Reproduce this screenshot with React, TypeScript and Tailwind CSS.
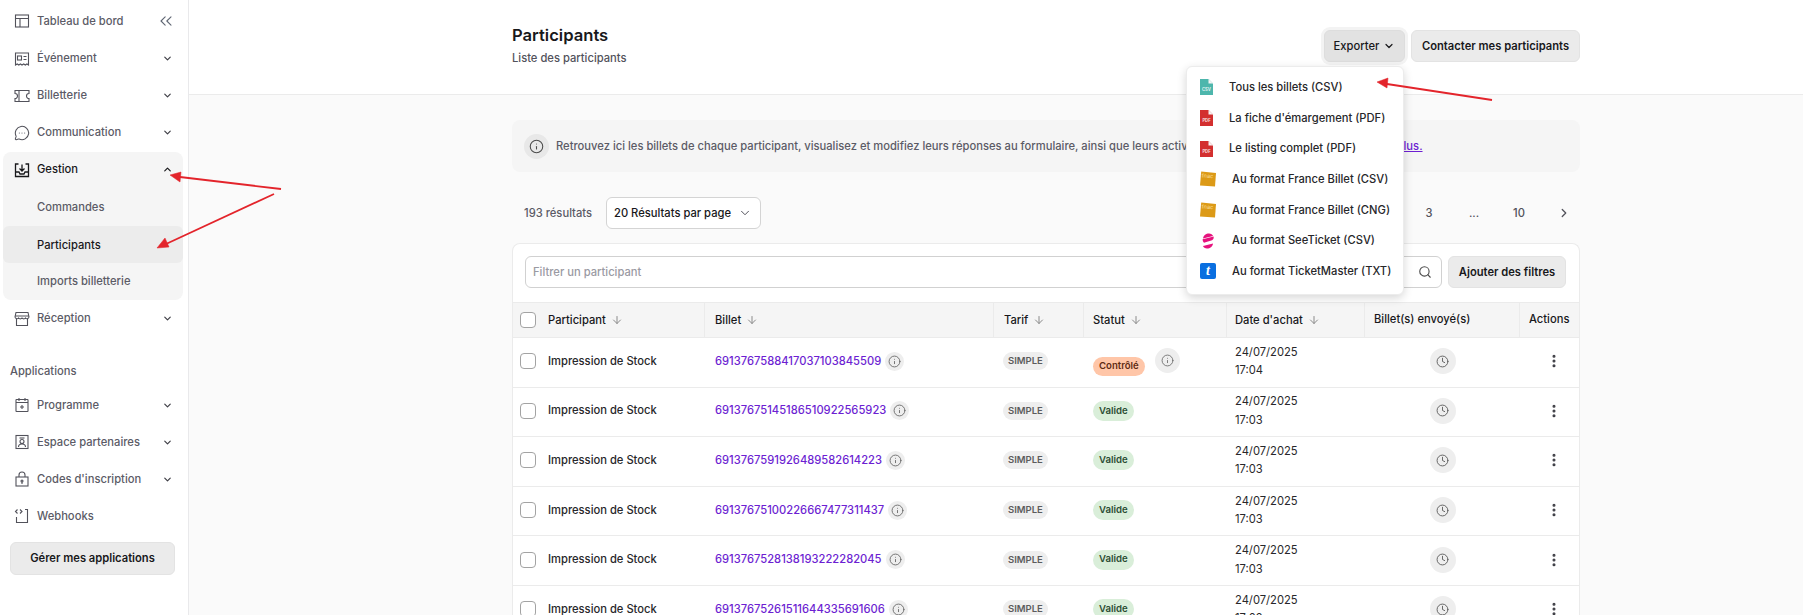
import React from 'react';
import { ChevronDown, ChevronUp, ChevronRight, ChevronsLeft, ArrowDown, Info, Clock, Search, EllipsisVertical, MessageCircleMore } from 'lucide-react';

const ic = { width: 16, height: 16, viewBox: '0 0 16 16', fill: 'none', stroke: 'currentColor', strokeWidth: 1.1 };
const IconTable = () => <svg {...ic}><rect x="1.5" y="2" width="13" height="12" /><path d="M1.5 5.5h13M6 5.5V14" /></svg>;
const IconEvent = () => <svg {...ic}><path d="M1.5 14V2h13v12l-1.6-1-1.6 1-1.6-1-1.7 1-1.6-1-1.6 1-1.6-1z" /><rect x="3.5" y="5" width="4" height="4" /><path d="M9.5 5.5h3M9.5 8.5h3" /></svg>;
const IconTicket = () => <svg {...ic}><path d="M1 2.5h14v3a2.500 2.500 0 0 0 0 5v3H1v-3a2.500 2.500 0 0 0 0-5z" /><path d="M5 2.500v11" /></svg>;
const IconInbox = () => <svg {...ic} strokeWidth={1.3}><path d="M4.500 2H1.500v12.500h13V2h-3M1.500 10h3.500l1 2h4l1-2h3.500M8 2.500v6.500M5.500 6.500 8 9l2.500-2.500" /></svg>;
const IconStore = () => <svg {...ic}><path d="M2 1.500h12l1 4.500a2 2 0 0 1-3.500 1 2.200 2.200 0 0 1-3.500 0 2.200 2.200 0 0 1-3.500 0A2 2 0 0 1 1 6z" /><path d="M1 5h14M2.500 8v6.500h11V8" /></svg>;
const IconCalendar = () => <svg {...ic}><rect x="2" y="2.500" width="12" height="12" rx="0.500" /><path d="M2 5.500h12M5 1v3M11 1v3M8 8v4M6 10h4" /></svg>;
const IconPartner = () => <svg {...ic}><rect x="2" y="1.500" width="12" height="13" /><path d="M5.500 4h5" /><circle cx="8" cy="7.500" r="2" /><path d="M4.500 13c0-2 1.500-3 3.500-3s3.500 1 3.500 3" /></svg>;
const IconLock = () => <svg {...ic}><rect x="2" y="6" width="12" height="9" /><path d="M5 6V4a3 3 0 0 1 6 0v2" /><circle cx="8" cy="10" r="1" /><path d="M8 11v2" /></svg>;
const IconHook = () => <svg {...ic}><path d="M2.500 9v5.500h11V1.500H11" /><path d="M3.500 1.500 1.500 3.500l2 2M6 1.500l2 2-2 2" /></svg>;

function NavItem({ icon, label, chev = 'down', dark = false, cls = 'h-[37px] pl-[14px] pr-[15px]' }: { icon: React.ReactNode; label: string; chev?: 'down' | 'up' | 'none'; dark?: boolean; cls?: string }) {
  return (
    <div className={'flex items-center ' + cls}>
      <span className={dark ? 'w-[23px] text-[#18181b]' : 'w-[23px] text-[#52525b]'}>{icon}</span>
      <span className={dark ? 'flex-1 text-[11.2px] font-medium text-[#18181b]' : 'flex-1 text-[11.2px] font-medium text-[#5b5b66]'}>{label}</span>
      {chev === 'down' && <ChevronDown size={11} strokeWidth={2.6} className="text-[#3f3f46]" />}
      {chev === 'up' && <ChevronUp size={11} strokeWidth={2.6} className="text-[#18181b]" />}
    </div>
  );
}

function Sidebar() {
  return (
    <aside className="w-[189px] shrink-0 bg-white border-r border-[#e9e9eb] flex flex-col pt-[3px] h-[615px]">
      <div className="h-[37px] pb-[1px] flex items-center pl-[14px] pr-[12px]">
        <span className="w-[23px] text-[#52525b]"><IconTable /></span>
        <span className="flex-1 text-[11.2px] font-medium text-[#5b5b66]">Tableau de bord</span>
        <ChevronsLeft size={20} strokeWidth={1.3} className="text-[#5f6673]" />
      </div>
      <NavItem icon={<IconEvent />} label="Événement" />
      <NavItem icon={<IconTicket />} label="Billetterie" />
      <NavItem icon={<MessageCircleMore size={16} strokeWidth={1.6} />} label="Communication" />
      <div className="mt-[1px] ml-[3px] w-[180px] bg-[#f5f5f5] rounded-lg">
        <NavItem icon={<IconInbox />} label="Gestion" chev="up" dark cls="h-[36px] pb-[1px] pl-[11px] pr-[10px]" />
        <div className="h-[38px] pt-[1px] flex items-center pl-[34px] text-[11.2px] font-medium text-[#5b5b66]">Commandes</div>
        <div className="h-[37px] pt-[1px] flex items-center pl-[34px] text-[11.2px] font-medium text-[#18181b] bg-[#ececec] rounded-md">Participants</div>
        <div className="h-[37px] flex items-center pl-[34px] text-[11.2px] font-medium text-[#5b5b66]">Imports billetterie</div>
      </div>
      <NavItem icon={<IconStore />} label="Réception" />
      <div className="mt-[24px] mb-[5.500px] h-[20px] flex items-center pl-[10px] text-[11.2px] font-medium text-[#5b5b66]">Applications</div>
      <NavItem icon={<IconCalendar />} label="Programme" />
      <NavItem icon={<IconPartner />} label="Espace partenaires" />
      <NavItem icon={<IconLock />} label="Codes d'inscription" />
      <NavItem icon={<IconHook />} label="Webhooks" chev="none" />
      <button className="mt-[7.500px] mx-[10px] h-[33px] w-[165px] rounded-md bg-[#ebebeb] border border-[#e3e3e3] text-[11.2px] font-semibold text-[#18181b]">Gérer mes applications</button>
    </aside>
  );
}

const FileIcon = ({ color, label }: { color: string; label: string }) => (
  <svg width="13" height="16" viewBox="0 0 13 16">
    <path d="M0 0h8.500l4.500 4.500V16H0z" fill={color} />
    <path d="M8.500 0 13 4.500H8.500z" fill="#f4f4f4" />
    <text x="6.500" y="11.500" textAnchor="middle" fontSize="4.200" fontWeight="700" fill="#fff" fillOpacity="0.85" fontFamily="Inter">{label}</text>
  </svg>
);
const FnacIcon = () => (
  <svg width="16" height="16" viewBox="0 0 16 16">
    <path d="M1.200 0.500 16 2 15 15.500 0 14.500z" fill="#dc9a17" />
    <text x="1.500" y="6.500" fontSize="5.500" fontWeight="500" fill="#f6d58c" fontFamily="Inter" transform="rotate(4 2 7)">fnac</text>
  </svg>
);
const SeeIcon = () => (
  <svg width="16" height="16" viewBox="0 0 16 16">
    <path d="M3 5.500C3.500 2 6 0.500 9 0.500c2 0 3.500 1 4 2.500z" fill="#e6127d" />
    <path d="M2.600 6.200 13.600 3.600c.4 2-.2 3-1.600 3.700L4 9.800C3 8.800 2.600 7.600 2.600 6.200z" fill="#e6127d" />
    <path d="M13 10.500C12.500 14 10 15.500 7 15.500c-2 0-3.500-1-4-2.500z" fill="#e6127d" />
  </svg>
);
const TmIcon = () => (
  <div className="w-[16px] h-[16px] rounded-[2px] bg-[#0a6fe0] flex items-center justify-center text-white text-[14px] font-bold italic leading-none font-['Liberation_Serif',serif]">t</div>
);

function MenuRow({ icon, label, wide }: { icon: React.ReactNode; label: string; wide?: boolean }) {
  return (
    <div className="h-[30.700px] flex items-center pl-[13px] shrink-0">
      <span className={wide ? 'w-[32px] flex' : 'w-[29px] flex'}>{icon}</span>
      <span className="text-[11.2px] font-medium text-[#27272a] whitespace-nowrap">{label}</span>
    </div>
  );
}

function ExportMenu() {
  return (
    <div className="absolute left-[-138px] top-[36px] w-[218px] h-[229px] bg-white rounded-md border border-[#ececec] shadow-[0_3px_10px_rgba(0,0,0,0.16)] pt-[5px] flex flex-col z-10">
      <MenuRow icon={<FileIcon color="#4db6ac" label="CSV" />} label="Tous les billets (CSV)" />
      <MenuRow icon={<FileIcon color="#d32f2f" label="PDF" />} label="La fiche d'émargement (PDF)" />
      <MenuRow icon={<FileIcon color="#d32f2f" label="PDF" />} label="Le listing complet (PDF)" />
      <MenuRow wide icon={<FnacIcon />} label="Au format France Billet (CSV)" />
      <MenuRow wide icon={<FnacIcon />} label="Au format France Billet (CNG)" />
      <MenuRow wide icon={<SeeIcon />} label="Au format SeeTicket (CSV)" />
      <MenuRow wide icon={<TmIcon />} label="Au format TicketMaster (TXT)" />
    </div>
  );
}

const cols = 'grid grid-cols-[192px_289px_90px_143px_138px_155px_1fr]';
const Sort = () => <ArrowDown size={12} strokeWidth={2} className="text-[#8a8a8a] ml-[5px]" />;
const Check = () => <span className="w-[16px] h-[16px] rounded-[4px] border border-[#a3a3a3] bg-white shrink-0" />;

const rows = [
  ['6913767588417037103845509', 'Contrôlé', '17:04'],
  ['69137675145186510922565923', 'Valide', '17:03'],
  ['6913767591926489582614223', 'Valide', '17:03'],
  ['69137675100226667477311437', 'Valide', '17:03'],
  ['6913767528138193222282045', 'Valide', '17:03'],
  ['69137675261511644335691606', 'Valide', '17:02'],
];

function Row({ id, status, time }: { id: string; status: string; time: string }) {
  const ctrl = status === 'Contrôlé';
  return (
    <div className={cols + ' h-[49.600px] border-t border-[#ebebeb] bg-white text-[11.2px] text-[#27272a] shrink-0'}>
      <div className="flex items-center pl-[7px] gap-[12px] pb-[2px]"><Check /><span className="font-medium">Impression de Stock</span></div>
      <div className="flex items-center pl-[10px] gap-[4px] pb-[2px]">
        <span className="text-[#6d1fd2] font-medium">{id}</span>
        <span className="w-[19px] h-[19px] rounded-full bg-[#eeeeee] flex items-center justify-center"><Info size={13} strokeWidth={1.7} className="text-[#6b6b6b]" /></span>
      </div>
      <div className="flex items-center pl-[9px] pb-[2px]"><span className="px-[5px] h-[18px] flex items-center rounded-full bg-[#eeeeee] text-[9.500px] font-semibold text-[#5c5c5c]">SIMPLE</span></div>
      <div className={ctrl ? 'flex items-start pl-[9px] gap-[10px]' : 'flex items-center pl-[9px] pb-[2px]'}>
        <span className={ctrl ? 'mt-[19px] px-[6px] h-[19px] flex items-center rounded-full bg-[#ffc6a8] text-[9.600px] font-semibold text-[#5f2c14]' : 'px-[6px] h-[20px] flex items-center rounded-full bg-[#d9eed9] text-[9.600px] font-semibold text-[#2b4d33]'}>{status}</span>
        {ctrl && <span className="mt-[10px] w-[25px] h-[25px] rounded-full bg-[#eeeeee] flex items-center justify-center"><Info size={13} strokeWidth={1.6} className="text-[#6b6b6b]" /></span>}
      </div>
      <div className="flex flex-col justify-center pl-[8px] leading-[18.500px] pb-[2px]"><span>24/07/2025</span><span>{time}</span></div>
      <div className="flex items-center justify-center pb-[2px]"><span className="w-[26px] h-[26px] rounded-full bg-[#eeeeee] flex items-center justify-center"><Clock size={13} strokeWidth={1.7} className="text-[#5c5c5c]" /></span></div>
      <div className="flex items-center justify-center pl-[8px] pb-[2px]"><EllipsisVertical size={16} strokeWidth={2.6} className="text-[#3f3f46]" /></div>
    </div>
  );
}

function HeadCell({ label, sort = true, cls = '' }: { label: string; sort?: boolean; cls?: string }) {
  return <div className={'flex items-center border-r border-[#ebebeb] last:border-r-0 font-medium ' + cls}><span>{label}</span>{sort && <Sort />}</div>;
}

export default function App() {
  return (
    <div className="relative w-[1803px] h-[615px] overflow-hidden flex bg-[#fafafa] font-['Inter',sans-serif]">
      <Sidebar />
      <main className="flex-1 min-w-0 flex flex-col">
        <header className="h-[95px] shrink-0 bg-white border-b border-[#ebebeb] pl-[323px] pr-[223px] pt-[24px] flex justify-between">
          <div>
            <h1 className="text-[16.600px] font-semibold text-[#18181b] leading-[22px]">Participants</h1>
            <p className="text-[11.2px] leading-[16px] font-medium text-[#52525b] mt-[4px]">Liste des participants</p>
          </div>
          <div className="flex gap-[6px] pt-[6px] h-[38px]">
            <div className="relative">
              <button className="h-[32px] w-[81px] rounded-md bg-[#e2e2e2] border border-[#dddddd] ring-[3px] ring-[#f3f3f3] text-[11.2px] font-medium text-[#18181b] flex items-center justify-center gap-[4px]">Exporter<ChevronDown size={12} strokeWidth={2.4} /></button>
              <ExportMenu />
            </div>
            <button className="h-[32px] w-[169px] rounded-md bg-[#ebebeb] border border-[#e3e3e3] text-[11.2px] font-semibold text-[#18181b]">Contacter mes participants</button>
          </div>
        </header>
        <div className="pl-[323px] pr-[223px] flex flex-col min-h-0">
          <div className="mt-[25px] h-[52px] shrink-0 rounded-lg bg-[#f5f5f5] flex items-center pl-[12px] gap-[7px]">
            <span className="w-[25px] h-[25px] rounded-full bg-[#e8e8e8] flex items-center justify-center"><Info size={15} strokeWidth={1.7} className="text-[#4b4b4b]" /></span>
            <span className="text-[11.2px] font-medium text-[#5b5b66] whitespace-nowrap">Retrouvez ici les billets de chaque participant, visualisez et modifiez leurs réponses au formulaire, ainsi que leurs activités et leurs envois de billets. <a className="text-[#6d1fd2] underline">En savoir plus.</a></span>
          </div>
          <div className="mt-[25px] h-[32px] shrink-0 flex items-center pl-[12px] text-[11.2px]">
            <span className="font-medium text-[#5b5b66] w-[82px]">193 résultats</span>
            <div className="w-[155px] h-[32px] rounded-md border border-[#d4d4d4] bg-white flex items-center pl-[7px] pr-[8px] justify-between font-medium text-[#18181b] whitespace-nowrap">20 Résultats par page<ChevronDown size={14} strokeWidth={1.7} className="text-[#52525b]" /></div>
            <div className="ml-auto pr-[1px] flex items-center gap-[15px] text-[#52525b] font-medium">
              <span className="w-[30px] text-center">3</span>
              <span className="w-[30px] text-center">...</span>
              <span className="w-[30px] text-center">10</span>
              <span className="w-[30px] flex justify-center"><ChevronRight size={14} strokeWidth={2.2} /></span>
            </div>
          </div>
          <section className="mt-[14px] rounded-t-lg border border-[#ebebeb] border-b-0 bg-white flex flex-col">
            <div className="h-[58px] flex items-center pl-[12px] pr-[13px] pb-[2px] gap-[6px]">
              <div className="flex-1 h-[32px] rounded-md border border-[#d1d1d1] flex items-center pl-[7px] pr-[9px] justify-between text-[11.2px] font-medium text-[#9a9aa3]">Filtrer un participant<Search size={14} strokeWidth={1.9} className="text-[#4b4b4b]" /></div>
              <button className="h-[32px] w-[118px] rounded-md bg-[#ebebeb] border border-[#e3e3e3] text-[11.2px] font-semibold text-[#18181b]">Ajouter des filtres</button>
            </div>
            <div className={cols + ' h-[35px] bg-[#f5f5f5] border-t border-[#ebebeb] text-[11.2px] text-[#18181b]'}>
              <div className="flex items-center pl-[7px] border-r border-[#ebebeb] font-medium"><Check /><span className="ml-[12px]">Participant</span><Sort /></div>
              <HeadCell label="Billet" cls="pl-[10px]" />
              <HeadCell label="Tarif" cls="pl-[10px]" />
              <HeadCell label="Statut" cls="pl-[9px]" />
              <HeadCell label="Date d'achat" cls="pl-[8px]" />
              <HeadCell label="Billet(s) envoyé(s)" sort={false} cls="pl-[9px] pb-[2px]" />
              <HeadCell label="Actions" sort={false} cls="pl-[9px] pb-[2px]" />
            </div>
            {rows.map((r) => <Row key={r[0]} id={r[0]} status={r[1]} time={r[2]} />)}
          </section>
        </div>
      </main>
      <svg className="absolute inset-0 pointer-events-none z-20" width="1803" height="615">
        <g fill="#e3242b" stroke="#e3242b">
          <line x1="281" y1="189" x2="180" y2="177" strokeWidth="1.800" />
          <path d="M170 175 181 172 180 182z" strokeWidth="0.500" />
          <line x1="274" y1="194" x2="166" y2="244" strokeWidth="1.800" />
          <path d="M157 248 165 238 169 247z" strokeWidth="0.500" />
          <line x1="1492" y1="100" x2="1387" y2="84" strokeWidth="1.800" />
          <path d="M1377 82 1388 78 1387 88z" strokeWidth="0.500" />
        </g>
      </svg>
    </div>
  );
}
